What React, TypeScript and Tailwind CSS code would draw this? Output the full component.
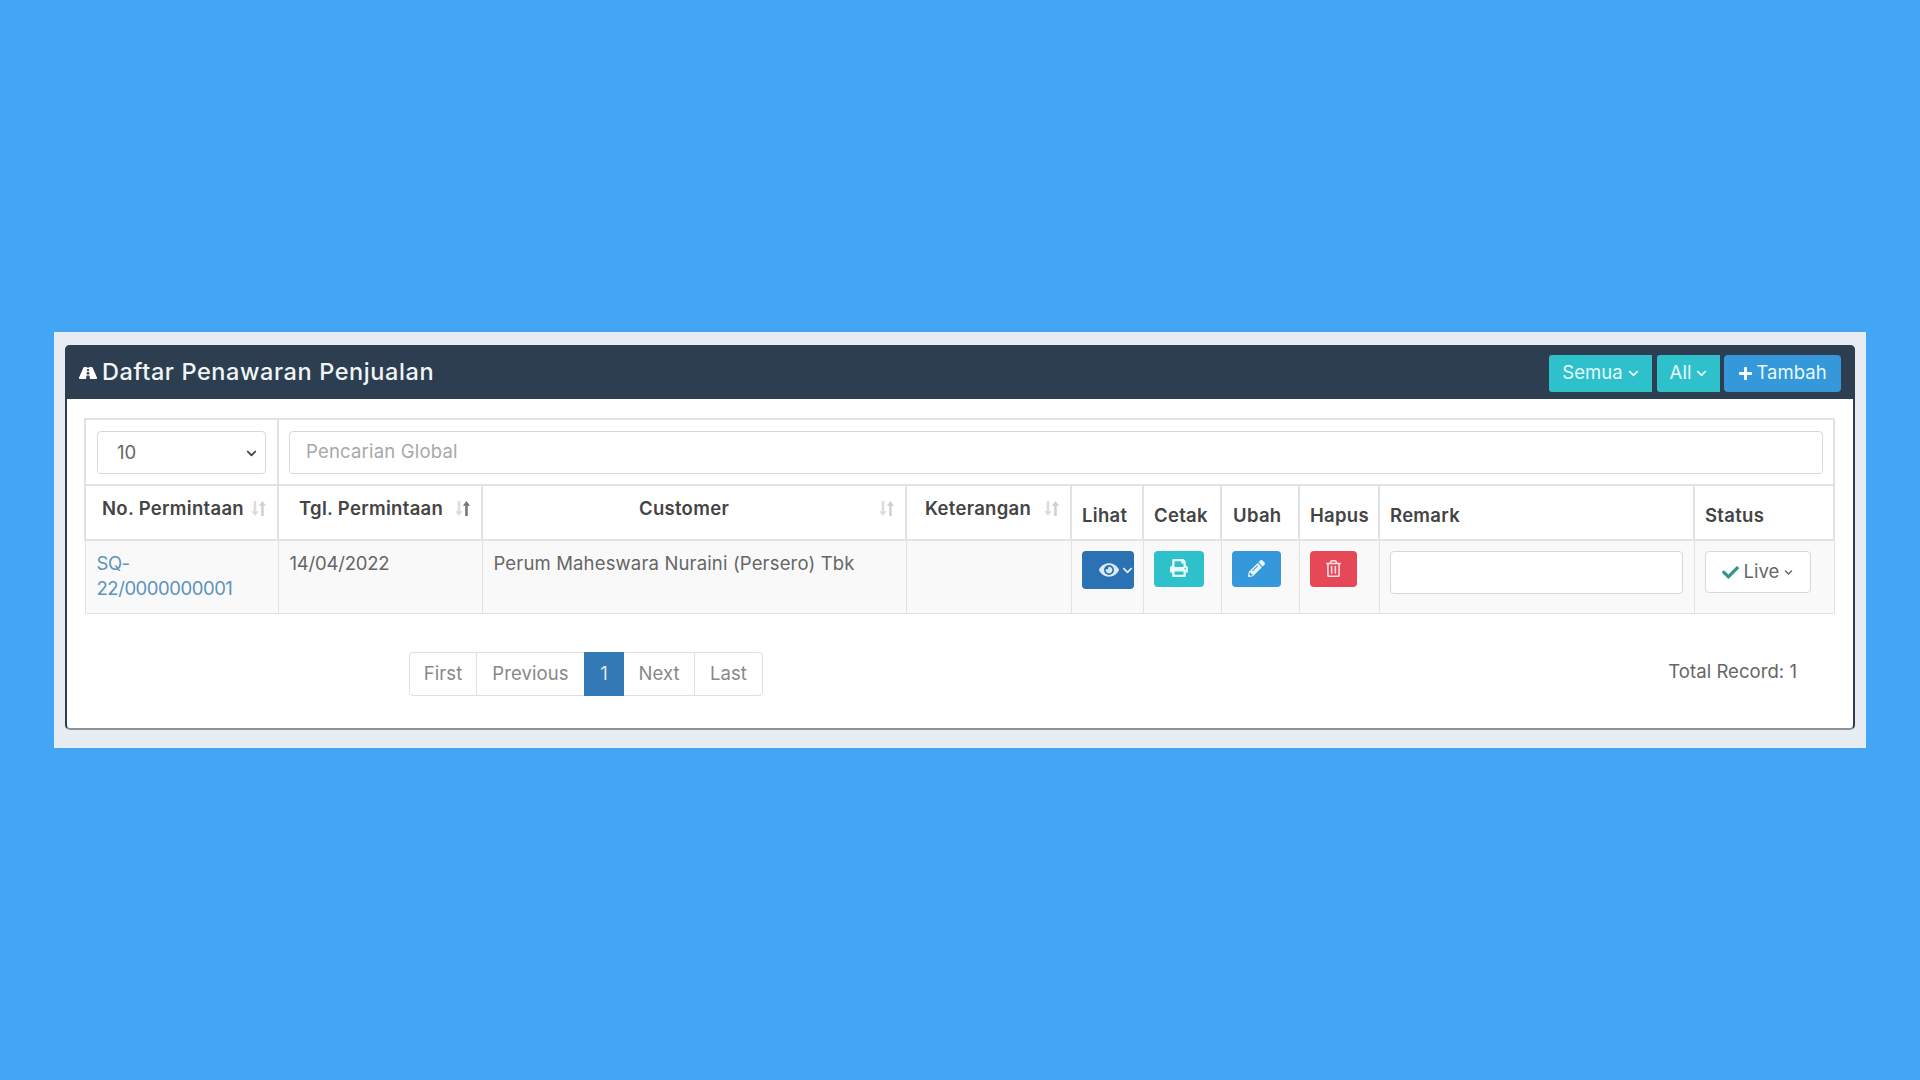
import { FaRoad, FaEye, FaPrint, FaPencilAlt, FaRegTrashAlt, FaPlus, FaCheck, FaChevronDown } from "react-icons/fa";

function SortIcon({ active = false, className }: { active?: boolean; className: string }) {
  return (
    <svg viewBox="0 0 17 14" className={"absolute w-[19px] h-[15px] " + className}>
      <path d="M4 0h2.4v9.5H8.6L5.2 14 1.8 9.5H4z" fill="#dcdcdc" />
      <path d="M11 14V4.5H8.8L12.2 0l3.4 4.5H13.4V14z" fill={active ? "#777777" : "#d0d0d0"} />
    </svg>
  );
}

const th = "relative align-top border-2 border-[#e2e2e2] text-left text-[18.5px] leading-[27px] font-semibold text-[#444444] tracking-[0.3px]";
const td = "align-top border border-[#e2e2e2] px-[11px] pt-[10px] pb-[11px] text-[18.5px] leading-[25px] tracking-[0.15px]";
const tdBtn = "align-top border border-[#e2e2e2] pl-[10px] pr-[8px] py-[10px]";
const pageItem = "flex items-center justify-center h-full text-[18.5px] text-[#888888] tracking-[0.1px] border-[#e0e0e0]";

export default function App() {
  return (
    <div className="min-h-screen bg-[#42a5f5] pt-[332px] px-[54px] font-['Inter','Noto_Sans',sans-serif]">
      <div className="bg-[#e8edf3] pt-[13px] px-[11px] pb-[18px]">
        <div className="rounded-[5px] bg-white border-2 border-t-0 border-[#2c3e50] border-b-[#8d939a]">
          <div className="-mx-[2px] rounded-t-[5px] h-[54px] bg-[#2c3e50] flex items-center pl-[14px] pr-[14px]">
            <FaRoad className="text-white w-[18px] h-[18px] mr-[5px] mt-[2px]" />
            <h1 className="text-[23.5px] font-medium text-[#f1f5f8] tracking-[0.6px]">Daftar Penawaran Penjualan</h1>
            <div className="ml-auto mt-[2px] flex h-[37px] text-[18.5px] text-[#e8fbfc] tracking-[0.05px]">
              <button className="w-[103px] bg-[#2ec1cb] rounded-l-[3px] flex items-center justify-center gap-[5px]">
                Semua <FaChevronDown className="w-[11px] h-[11px]" />
              </button>
              <button className="ml-[5px] w-[63px] bg-[#2ec1cb] rounded-l-[3px] flex items-center justify-center gap-[5px]">
                All <FaChevronDown className="w-[11px] h-[11px]" />
              </button>
              <button className="ml-[4px] w-[117px] bg-[#3498db] rounded-[4px] flex items-center justify-center gap-[3px]">
                <FaPlus className="w-[15px] h-[15px] text-white" /> Tambah
              </button>
            </div>
          </div>
          <div className="pt-[19px] pl-[17px] pr-[18px] pb-[32px]">
            <table className="w-full table-fixed border-collapse">
              <colgroup>
                <col className="w-[193px]" />
                <col className="w-[204px]" />
                <col className="w-[424px]" />
                <col className="w-[165px]" />
                <col className="w-[72px]" />
                <col className="w-[78px]" />
                <col className="w-[78px]" />
                <col className="w-[80px]" />
                <col className="w-[315px]" />
                <col />
              </colgroup>
              <tbody>
                <tr className="h-[66px]">
                  <td className="border-2 border-[#e2e2e2] px-[11px] align-middle">
                    <div className="relative">
                      <select defaultValue="10" className="w-full h-[43px] appearance-none bg-white rounded-[4px] border border-[#d8d8d8] pl-[19px] pt-[2px] text-[18.5px] text-[#666666] outline-none">
                        <option>10</option>
                      </select>
                      <FaChevronDown className="absolute right-[9px] top-[17px] w-[11px] h-[11px] text-[#444444]" />
                    </div>
                  </td>
                  <td colSpan={9} className="border-2 border-[#e2e2e2] pl-[10px] pr-[10px] align-middle">
                    <input placeholder="Pencarian Global" className="w-full h-[43px] rounded-[4px] border border-[#d8d8d8] px-[16px] pb-[2px] text-[18.5px] tracking-[0.2px] placeholder:text-[#a8a8a8] outline-none" />
                  </td>
                </tr>
                <tr className="h-[55px]">
                  <th className={th + " pl-[16px] pt-[9px]"}>No. Permintaan<SortIcon className="right-[9px] top-[15px]" /></th>
                  <th className={th + " pl-[20px] pt-[9px]"}>Tgl. Permintaan<SortIcon active className="right-[9px] top-[15px]" /></th>
                  <th className={th + " pr-[20px] pt-[9px] !text-center"}>Customer<SortIcon className="right-[9px] top-[15px]" /></th>
                  <th className={th + " pl-[18px] pt-[9px]"}>Keterangan<SortIcon className="right-[9px] top-[15px]" /></th>
                  <th className={th + " pl-[10px] pt-[16px]"}>Lihat</th>
                  <th className={th + " pl-[10px] pt-[16px]"}>Cetak</th>
                  <th className={th + " pl-[11px] pt-[16px]"}>Ubah</th>
                  <th className={th + " pl-[10px] pt-[16px]"}>Hapus</th>
                  <th className={th + " pl-[10px] pt-[16px]"}>Remark</th>
                  <th className={th + " pl-[10px] pt-[16px]"}>Status</th>
                </tr>
                <tr className="h-[73px] bg-[#f9f9f9] text-[#666666]">
                  <td className={td}><a className="text-[#5b93bd] tracking-[-0.45px]">SQ-<br />22/0000000001</a></td>
                  <td className={td + " !tracking-[-0.2px]"}>14/04/2022</td>
                  <td className={td}>Perum Maheswara Nuraini (Persero) Tbk</td>
                  <td className={td}></td>
                  <td className={tdBtn}>
                    <button className="w-[52px] h-[38px] bg-[#2b72b4] rounded-[4px] flex items-center justify-end pr-[1px] gap-[3px] text-[#dce9f3]">
                      <FaEye className="w-[20px] h-[20px]" />
                      <FaChevronDown className="w-[11px] h-[11px]" />
                    </button>
                  </td>
                  <td className={tdBtn}>
                    <button className="w-[50px] h-[36px] bg-[#2ec1cb] rounded-[4px] flex items-center justify-center text-[#e8fbfc]">
                      <FaPrint className="w-[18px] h-[18px] -mt-[2px]" />
                    </button>
                  </td>
                  <td className={tdBtn}>
                    <button className="w-[49px] h-[36px] bg-[#3498db] rounded-[4px] flex items-center justify-center text-[#eaf5fb]">
                      <FaPencilAlt className="w-[17px] h-[17px] -mt-[1px]" />
                    </button>
                  </td>
                  <td className={tdBtn}>
                    <button className="w-[47px] h-[36px] bg-[#e74857] rounded-[4px] flex items-center justify-center text-[#fbe3e5]">
                      <FaRegTrashAlt className="w-[15px] h-[17px] -mt-[1px]" />
                    </button>
                  </td>
                  <td className={tdBtn}>
                    <input className="block w-[293px] h-[43px] bg-white rounded-[4px] border border-[#d8d8d8] outline-none" />
                  </td>
                  <td className={tdBtn}>
                    <button className="w-[106px] h-[42px] bg-white rounded-[4px] border border-[#d8d8d8] flex items-center justify-center gap-[5px] text-[18.5px] text-[#666666]">
                      <FaCheck className="w-[17px] h-[17px] text-[#35968c]" /> Live <FaChevronDown className="w-[9px] h-[9px]" />
                    </button>
                  </td>
                </tr>
              </tbody>
            </table>
            <div className="mt-[38px] flex items-start justify-between pl-[325px] pr-[38px]">
              <nav className="flex h-[44px] w-[354px] rounded-[4px] border border-[#e0e0e0] bg-white">
                <a className={pageItem + " w-[67px] border-r"}>First</a>
                <a className={pageItem + " w-[107px]"}>Previous</a>
                <a className="flex items-center justify-center h-[44px] -mt-px w-[40px] bg-[#337ab7] text-[18.5px] text-[#dce9f3]">1</a>
                <a className={pageItem + " w-[71px] border-r"}>Next</a>
                <a className={pageItem + " flex-1"}>Last</a>
              </nav>
              <p className="pt-[6px] text-[18.5px] leading-[27px] text-[#666666] tracking-[0.05px]">Total Record: 1</p>
            </div>
          </div>
        </div>
      </div>
    </div>
  );
}
